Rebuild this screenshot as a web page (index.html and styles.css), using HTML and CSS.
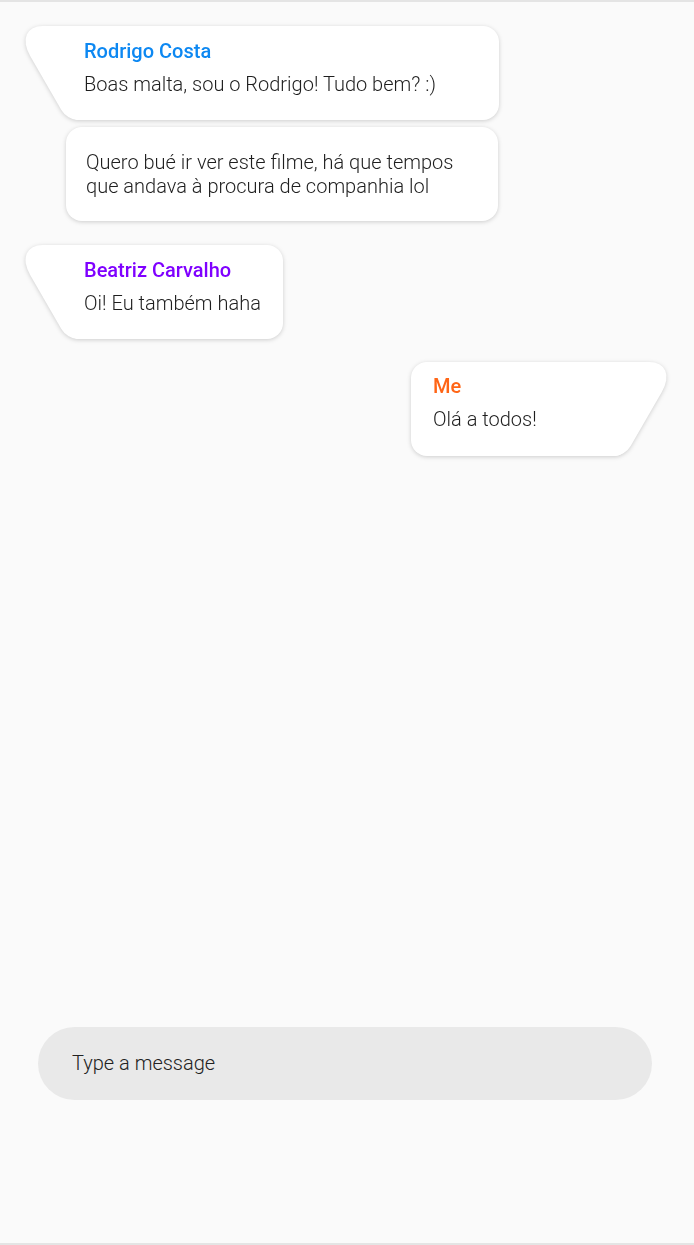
FILE: index.html
```html
<!DOCTYPE html>
<html lang="pt">
<head>
<meta charset="utf-8">
<title>Chat</title>
<link rel="stylesheet" href="styles.css">
</head>
<body>
<div class="app">
  <main class="messages">
    <div class="group group-left">
      <div class="bubble tail-left wide">
        <div class="name name-blue">Rodrigo Costa</div>
        <div class="text">Boas malta, sou o Rodrigo! Tudo bem? :)</div>
      </div>
      <div class="bubble plain wide2">
        <div class="text">Quero bué ir ver este filme, há que tempos que andava à procura de companhia lol</div>
      </div>
    </div>
    <div class="group group-left gap-top">
      <div class="bubble tail-left">
        <div class="name name-purple">Beatriz Carvalho</div>
        <div class="text">Oi! Eu também haha</div>
      </div>
    </div>
    <div class="group group-right gap-top2">
      <div class="bubble tail-right">
        <div class="name name-orange">Me</div>
        <div class="text">Olá a todos!</div>
      </div>
    </div>
  </main>
  <footer class="composer">
    <input class="composer-input" type="text" placeholder="Type a message">
  </footer>
</div>
</body>
</html>
```

FILE: styles.css
```css
* { box-sizing: border-box; }

html, body {
  margin: 0;
  padding: 0;
  background: #fafafa;
}

body {
  font-family: Roboto, "Noto Sans", "Liberation Sans", sans-serif;
  color: #1e1e1e;
}

.app {
  height: 1245px;
  display: flex;
  flex-direction: column;
  border-top: 2px solid #e4e4e4;
  border-bottom: 2px solid #e4e4e4;
}

.messages {
  flex: 1;
  padding: 24px 0 0;
  display: flex;
  flex-direction: column;
}

.group {
  display: flex;
  flex-direction: column;
  gap: 7px;
}

.group-left {
  padding-left: 64px;
  align-items: flex-start;
}

.group-right {
  padding-right: 64px;
  align-items: flex-end;
}

.gap-top { margin-top: 24px; }
.gap-top2 { margin-top: 23px; }

.bubble {
  position: relative;
  background: #fff;
  border-radius: 16px;
  min-width: 219px;
  filter: drop-shadow(0 1px 2px rgba(0, 0, 0, 0.18));
  font-size: 20px;
  line-height: 24px;
}

.tail-left {
  padding: 13px 21px 24px 20px;
}

.tail-right {
  padding: 12px 20px 25px 22px;
}

.plain {
  padding: 23px 20px;
}

.wide { width: 435px; }
.wide2 { width: 432px; margin-left: 2px; }

.tail-left::before,
.tail-right::before {
  content: "";
  position: absolute;
  top: 0;
  bottom: 0;
  width: 80px;
  background: #fff;
  z-index: -1;
}

.tail-left::before {
  left: -24px;
  border-radius: 30px 0 0 10px;
  transform: skewX(30deg);
}

.tail-right::before {
  right: -22px;
  border-radius: 0 30px 10px 0;
  transform: skewX(-30deg);
}

.name {
  font-weight: 500;
  font-size: 20px;
  line-height: 24px;
  margin-bottom: 9px;
}

.name-blue { color: #0d88f2; }
.name-purple { color: #7f00ff; }
.name-orange { color: #ff6516; }

.text {
  font-weight: 300;
}

.composer {
  padding: 0 42px 143px 38px;
}

.composer-input {
  display: block;
  width: 100%;
  height: 73px;
  border: none;
  outline: none;
  border-radius: 37px;
  background: #e9e9e9;
  padding: 0 34px 2px;
  font-family: Roboto, "Noto Sans", "Liberation Sans", sans-serif;
  font-weight: 300;
  font-size: 20px;
  color: #1e1e1e;
}

.composer-input::placeholder {
  color: #222;
  opacity: 1;
}
```
